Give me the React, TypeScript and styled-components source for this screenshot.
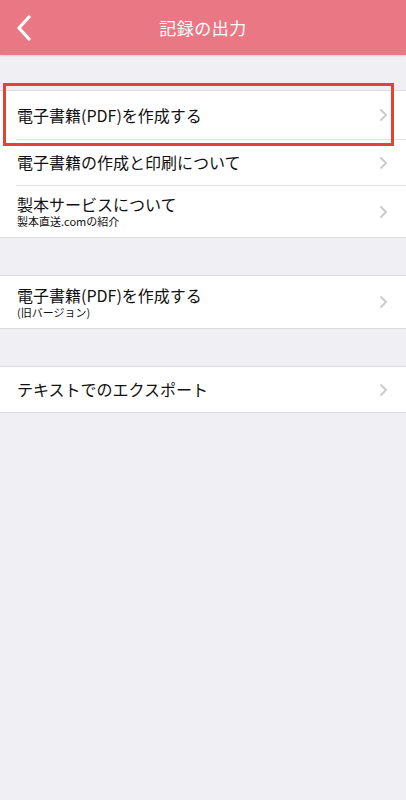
import React from 'react';
import styled, { createGlobalStyle } from 'styled-components';

const GlobalStyle = createGlobalStyle`
  html, body {
    margin: 0;
    padding: 0;
    background: #efeff4;
    font-family: "Noto Sans CJK JP", "Noto Sans", sans-serif;
  }
`;

const Screen = styled.div`
  width: 406px;
  min-height: 800px;
  background: #efeff4;
`;

const Header = styled.header`
  height: 55px;
  background: #ea7884;
  display: grid;
  grid-template-columns: 55px 1fr 55px;
  align-items: center;
  box-shadow: 0 1px 2px rgba(0, 0, 0, 0.12);
`;

const BackButton = styled.button`
  border: none;
  background: none;
  padding: 0 0 0 16px;
  height: 100%;
  display: flex;
  align-items: center;
`;

const Title = styled.h1`
  margin: 0;
  color: #fff;
  font-size: 17px;
  font-weight: 400;
  text-align: center;
  letter-spacing: 0.5px;
`;

const Content = styled.main`
  display: flex;
  flex-direction: column;
  gap: 37px;
  padding-top: 35px;
`;

const Section = styled.section`
  position: relative;
  background: #fff;
  border-top: 1px solid #dcdce0;
  border-bottom: 1px solid #dcdce0;
`;

const Row = styled.div<{ $h: number }>`
  height: ${(p) => p.$h}px;
  display: flex;
  align-items: center;
  padding: 0 18px 0 17px;

  & + & {
    border-top: 1px solid #e0e0e4;
    margin-left: 16px;
    padding-left: 1px;
  }
`;

const Labels = styled.div`
  flex: 1;
  display: flex;
  flex-direction: column;
  gap: 1px;
`;

const Label = styled.span`
  font-size: 16px;
  color: #111;
  line-height: 19px;
`;

const Sub = styled.span`
  font-size: 11px;
  color: #111;
  line-height: 13px;
`;

const Highlight = styled.div`
  position: absolute;
  top: -8px;
  left: 3px;
  width: 385px;
  height: 57px;
  border: 3px solid #e2452f;
  pointer-events: none;
`;

const Chevron = () => (
  <svg width="9" height="14" viewBox="0 0 9 14">
    <path d="M1.5 1.5 L7 7 L1.5 12.5" fill="none" stroke="#c8c8cd" strokeWidth="1.8" />
  </svg>
);

interface Item {
  label: string;
  sub?: string;
  h: number;
}

const sections: Item[][] = [
  [
    { label: '電子書籍(PDF)を作成する', h: 48 },
    { label: '電子書籍の作成と印刷について', h: 45 },
    { label: '製本サービスについて', sub: '製本直送.comの紹介', h: 51 },
  ],
  [{ label: '電子書籍(PDF)を作成する', sub: '(旧バージョン)', h: 52 }],
  [{ label: 'テキストでのエクスポート', h: 45 }],
];

const App = () => {
  return (
    <Screen>
      <GlobalStyle />
      <Header>
        <BackButton>
          <svg width="16" height="26" viewBox="0 0 16 26">
            <path d="M13 2 L3 13 L13 24" fill="none" stroke="#fff" strokeWidth="3.2" strokeLinecap="round" strokeLinejoin="round" />
          </svg>
        </BackButton>
        <Title>記録の出力</Title>
        <span />
      </Header>
      <Content>
        {sections.map((items, si) => (
          <Section key={si}>
            {items.map((it, i) => (
              <Row key={i} $h={it.h}>
                <Labels>
                  <Label>{it.label}</Label>
                  {it.sub && <Sub>{it.sub}</Sub>}
                </Labels>
                <Chevron />
              </Row>
            ))}
            {si === 0 && <Highlight />}
          </Section>
        ))}
      </Content>
    </Screen>
  );
};

export default App;
